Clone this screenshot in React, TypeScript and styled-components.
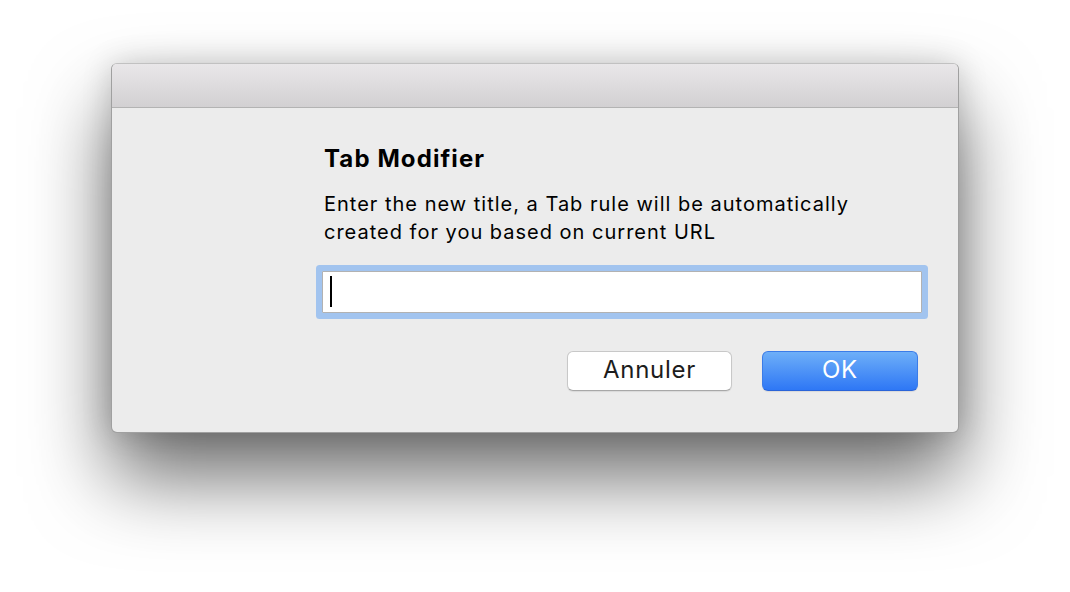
import * as React from 'react';
import styled, { createGlobalStyle } from 'styled-components';

const GlobalStyle = createGlobalStyle`
  html, body {
    margin: 0;
    padding: 0;
    background: #ffffff;
  }
  body {
    font-family: Inter, "Liberation Sans", sans-serif;
    -webkit-font-smoothing: antialiased;
  }
`;

const Page = styled.div`
  box-sizing: border-box;
  display: flex;
  justify-content: center;
  align-items: flex-start;
  width: 1070px;
  height: 592px;
  padding-top: 63px;
  overflow: hidden;
`;

const Window = styled.div`
  box-sizing: border-box;
  display: flex;
  flex-direction: column;
  width: 848px;
  height: 370px;
  border: 1px solid rgba(0, 0, 0, 0.32);
  border-top-color: rgba(0, 0, 0, 0.18);
  border-radius: 6px;
  overflow: hidden;
  background: #ececec;
  box-shadow: 0 44px 80px rgba(0, 0, 0, 0.58), 0 0 30px rgba(0, 0, 0, 0.16);
`;

const TitleBar = styled.div`
  flex: none;
  height: 43px;
  background: linear-gradient(to bottom, #e9e7e9, #d2d0d2);
  border-bottom: 1px solid #b3b3b3;
`;

const Body = styled.div`
  flex: 1;
  display: flex;
  flex-direction: column;
  padding: 36px 36px 0 210px;
`;

const Title = styled.h1`
  margin: 0 0 16px;
  padding-left: 2px;
  font-size: 24px;
  line-height: 30px;
  font-weight: 700;
  letter-spacing: 1.1px;
  color: #000;
`;

const Message = styled.p`
  margin: 0 0 25px;
  padding-left: 2px;
  font-size: 20px;
  line-height: 28px;
  letter-spacing: 1px;
  color: #000;
`;

const FieldWrap = styled.div`
  position: relative;
  box-sizing: border-box;
  height: 42px;
  background: #fff;
  border: 1px solid #b2b2b2;
  box-shadow: 0 0 0 6px #a2c4ef;
  border-radius: 1px;
`;

const Caret = styled.span`
  position: absolute;
  left: 7px;
  top: 4px;
  width: 2px;
  height: 31px;
  background: #000;
`;

const ButtonRow = styled.div`
  display: flex;
  justify-content: flex-end;
  gap: 30px;
  margin-top: 38px;
  padding-right: 4px;
`;

const Button = styled.button<{ $primary?: boolean; $width: number }>`
  box-sizing: border-box;
  width: ${p => p.$width}px;
  height: 40px;
  border-radius: 6px;
  font-family: Inter, "Liberation Sans", sans-serif;
  font-size: 24px;
  line-height: 1;
  letter-spacing: 0.7px;
  padding: 0 0 2px;
  color: ${p => (p.$primary ? '#ffffff' : '#1d1d1d')};
  background: ${p => (p.$primary ? 'linear-gradient(to bottom, #6eaff8, #2e77f5)' : '#ffffff')};
  border: 1px solid ${p => (p.$primary ? '#3b7ce8' : '#c8c8c8')};
  border-bottom-color: ${p => (p.$primary ? '#2a64d8' : '#a8a8a8')};
  box-shadow: 0 1px 1px rgba(0, 0, 0, 0.08);
`;

export default function App() {
  return (
    <>
      <GlobalStyle />
      <Page>
        <Window>
          <TitleBar />
          <Body>
            <Title>Tab Modifier</Title>
            <Message>
              Enter the new title, a Tab rule will be automatically
              <br />
              created for you based on current URL
            </Message>
            <FieldWrap>
              <Caret />
            </FieldWrap>
            <ButtonRow>
              <Button $width={165}>Annuler</Button>
              <Button $width={156} $primary>
                OK
              </Button>
            </ButtonRow>
          </Body>
        </Window>
      </Page>
    </>
  );
}
